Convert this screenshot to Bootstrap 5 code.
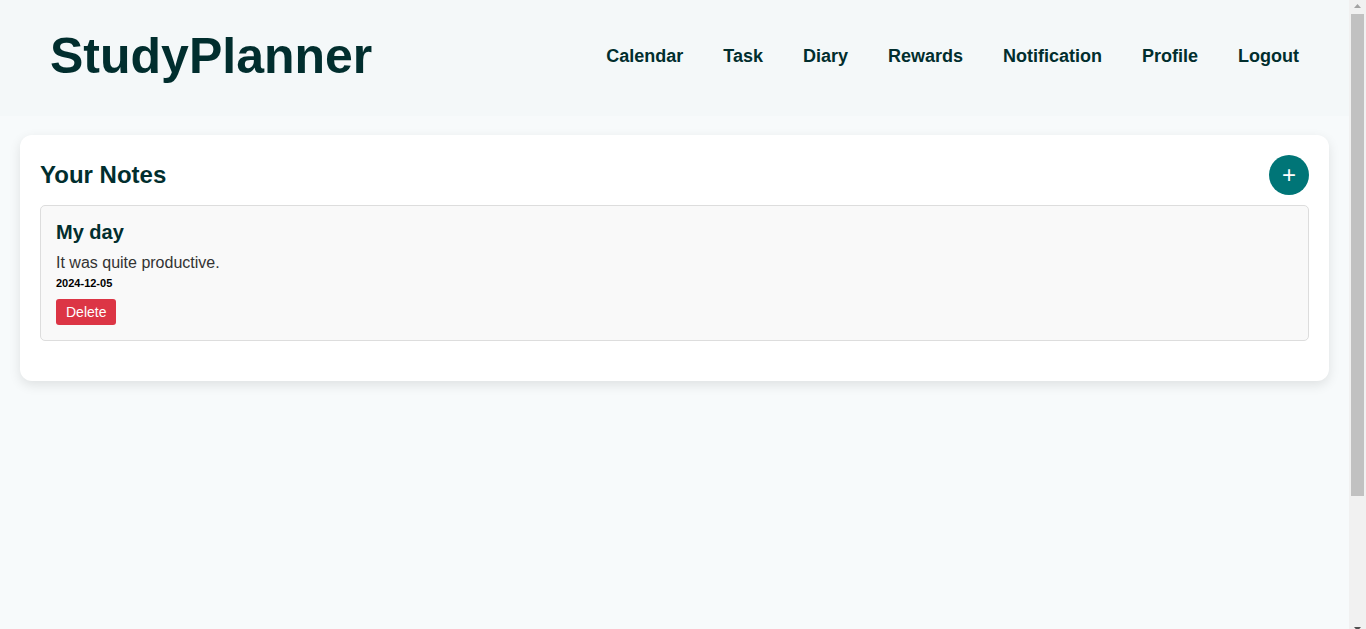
<!DOCTYPE html>
<html lang="en">
<head>
<meta charset="utf-8">
<title>StudyPlanner</title>
<link href="https://cdn.jsdelivr.net/npm/bootstrap@5.3.0/dist/css/bootstrap.min.css" rel="stylesheet">
<style>
html,body{height:100%;overflow:hidden;}
body{background:#f7fafb;font-family:"Liberation Sans",Arial,sans-serif;color:#333;}
.sp-root{height:629px;}
.sp-page{min-width:0;}
.sp-header{background:#f4f8f9;height:116px;padding:0 50px 4px;}
.sp-brand{font-size:50px;font-weight:700;color:#012e2e;line-height:1;text-decoration:none;}
.sp-menu{gap:40px;}
.sp-menu a{font-size:18px;font-weight:700;color:#012e2e;text-decoration:none;}
.sp-panel{margin:19px 20px 0;padding:20px;background:#fff;border-radius:12px;box-shadow:0 4px 12px rgba(0,0,0,.1);height:246px;}
.sp-title{font-size:24px;font-weight:700;color:#012e2e;margin:0;}
.sp-add{width:40px;height:40px;border-radius:50%;background:#007577;color:#fff;border:0;padding:0;font-size:24px;line-height:1;}
.sp-note{margin-top:10px;padding:15px;background:#f9f9f9;border:1px solid #ddd;border-radius:5px;height:136px;}
.sp-note-title{font-size:20px;font-weight:700;color:#012e2e;margin:0 0 10px;line-height:23px;}
.sp-note-text{font-size:16px;margin:0;line-height:18px;color:#333;}
.sp-note-date{font-size:11px;font-weight:700;color:#000;margin:5px 0 9px;line-height:13px;display:block;}
.sp-del{background:#dc3545;color:#fff;border:0;border-radius:3px;font-size:14px;padding:0 10px;height:26px;line-height:26px;display:block;}
.sp-scroll{width:17px;background:#f1f1f1;}
.sp-arrow{height:14px;}
.sp-track{padding-left:2px;padding-right:2px;}
.sp-thumb{height:482px;background:#c1c1c1;}
</style>
</head>
<body>
<div class="sp-root d-flex">
  <div class="sp-page flex-grow-1">
    <header class="sp-header d-flex align-items-center justify-content-between">
      <a class="sp-brand" href="#">StudyPlanner</a>
      <nav class="sp-menu d-flex align-items-center">
        <a href="#">Calendar</a><a href="#">Task</a><a href="#">Diary</a><a href="#">Rewards</a><a href="#">Notification</a><a href="#">Profile</a><a href="#">Logout</a>
      </nav>
    </header>
    <main class="sp-panel">
      <div class="d-flex align-items-center justify-content-between">
        <h2 class="sp-title">Your Notes</h2>
        <button class="sp-add d-flex align-items-center justify-content-center" type="button">+</button>
      </div>
      <div class="sp-note">
        <h3 class="sp-note-title">My day</h3>
        <p class="sp-note-text">It was quite productive.</p>
        <span class="sp-note-date">2024-12-05</span>
        <button class="sp-del" type="button">Delete</button>
      </div>
    </main>
  </div>
  <div class="sp-scroll d-flex flex-column flex-shrink-0" aria-hidden="true">
    <svg class="sp-arrow d-block" width="17" height="14" viewBox="0 0 17 14"><path d="M8.5 4L12 8H5z" fill="#a3a3a3"/></svg>
    <div class="sp-track flex-grow-1"><div class="sp-thumb"></div></div>
    <svg class="sp-arrow d-block" width="17" height="14" viewBox="0 0 17 14"><path d="M5 12h7L8.5 16z" fill="#505050"/></svg>
  </div>
</div>
</body>
</html>
